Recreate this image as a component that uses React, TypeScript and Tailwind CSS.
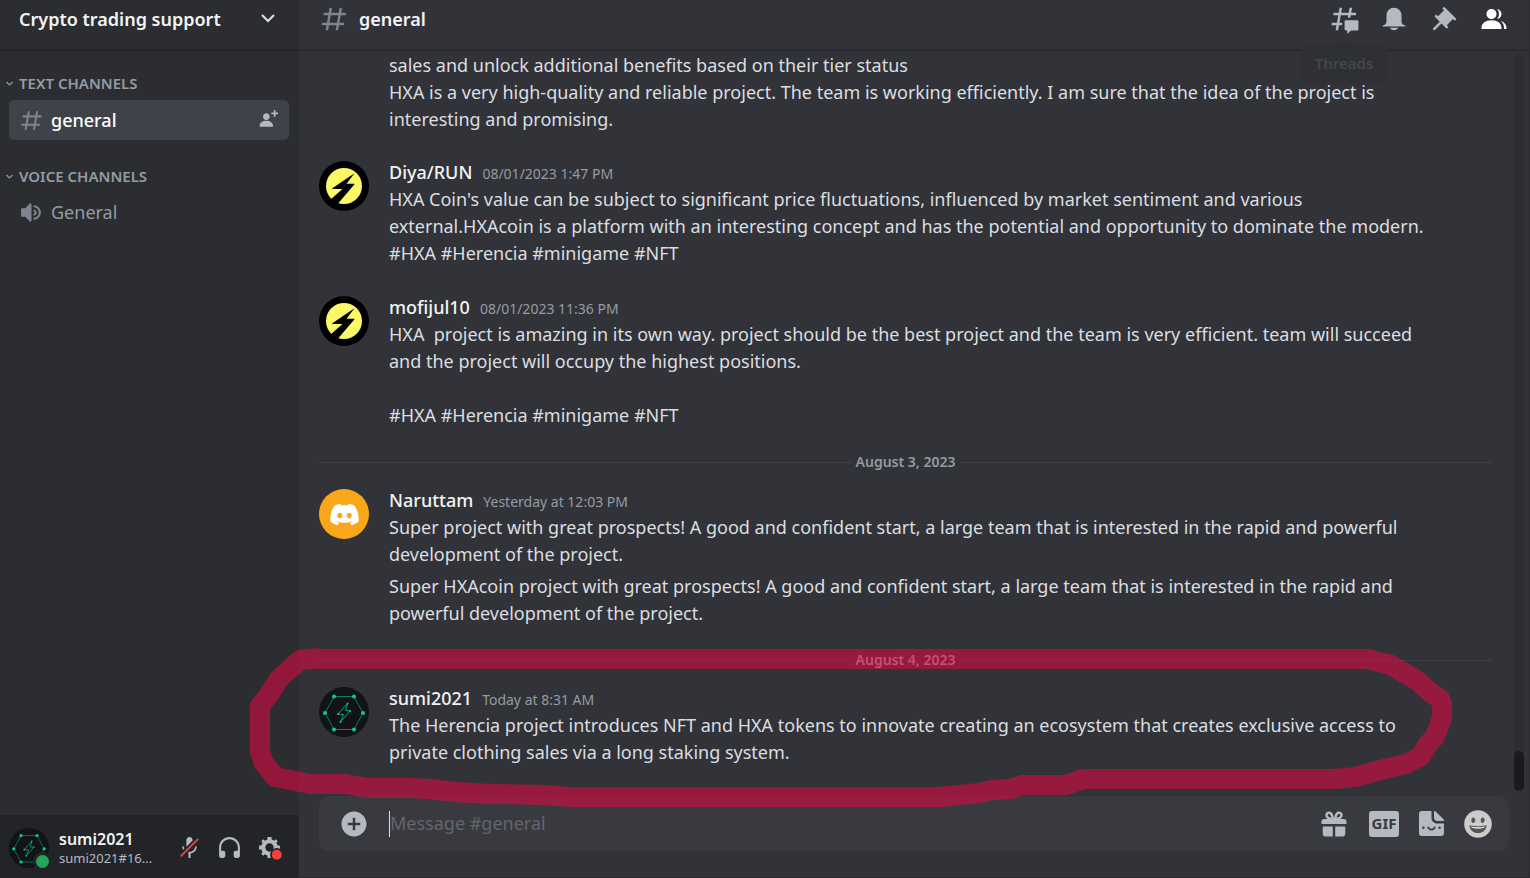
import React from 'react';
import { FaDiscord } from 'react-icons/fa';

interface IconProps {
  className?: string;
  children: React.ReactNode;
}

const Icon: React.FC<IconProps> = ({ className = 'w-[30px] h-[30px]', children }) => (
  <svg viewBox="0 0 24 24" fill="currentColor" aria-hidden="true" className={`shrink-0 ${className}`}>
    {children}
  </svg>
);

const HashIcon: React.FC<{ className?: string }> = ({ className }) => (
  <Icon className={className}>
    <path
      fillRule="evenodd"
      clipRule="evenodd"
      d="M5.88657 21C5.57547 21 5.3399 20.7189 5.39427 20.4126L6.00001 17H2.59511C2.28449 17 2.04905 16.7198 2.10259 16.4138L2.27759 15.4138C2.31946 15.1746 2.52722 15 2.77011 15H6.35001L7.41001 9H4.00511C3.69449 9 3.45905 8.71977 3.51259 8.41381L3.68759 7.41381C3.72946 7.17456 3.93722 7 4.18011 7H7.76001L8.39677 3.41262C8.43914 3.17391 8.64664 3 8.88907 3H9.87344C10.1845 3 10.4201 3.28107 10.3657 3.58738L9.76001 7H15.76L16.3968 3.41262C16.4391 3.17391 16.6466 3 16.8891 3H17.8734C18.1845 3 18.4201 3.28107 18.3657 3.58738L17.76 7H21.1649C21.4755 7 21.711 7.28023 21.6574 7.58619L21.4824 8.58619C21.4406 8.82544 21.2328 9 20.9899 9H17.41L16.35 15H19.7549C20.0655 15 20.301 15.2802 20.2474 15.5862L20.0724 16.5862C20.0306 16.8254 19.8228 17 19.5799 17H16L15.3632 20.5874C15.3209 20.8261 15.1134 21 14.8709 21H13.8866C13.5755 21 13.3399 20.7189 13.3943 20.4126L14 17H8.00001L7.36325 20.5874C7.32088 20.8261 7.11337 21 6.87094 21H5.88657ZM9.41045 9L8.35045 15H14.3504L15.4104 9H9.41045Z"
    />
  </Icon>
);

const BoltAvatar = () => (
  <svg viewBox="0 0 50 50" className="w-[50px] h-[50px]" aria-hidden="true">
    <circle cx="25" cy="25" r="25" fill="#000" />
    <circle cx="25" cy="25" r="18" fill="#fdf966" />
    <path d="M35.500 12.300 13.300 27.200v.8h10.200L11 39l3.500 5 5-2L35.300 23.500v-.7h-7.800Z" fill="#000" />
  </svg>
);

const DiscordAvatar = () => (
  <div className="flex w-[50px] h-[50px] items-center justify-center rounded-full bg-[#faa61a]">
    <FaDiscord className="w-[31px] h-[31px] text-white" aria-hidden="true" />
  </div>
);

const HexAvatar: React.FC<{ className?: string }> = ({ className = 'w-[50px] h-[50px]' }) => (
  <svg viewBox="0 0 50 50" className={className} aria-hidden="true">
    <circle cx="25" cy="25" r="25" fill="#111317" />
    <path d="M15 9.500h20L44 26l-9 16.500H15L6 26Z" fill="none" stroke="#0b7f5b" strokeWidth="1" />
    <path d="M28.500 16.500 19 27l5.500.5L21.500 35 31 24l-4.500-.5Z" fill="none" stroke="#08a877" strokeWidth="1" />
    <g fill="#0ccf8f">
      <circle cx="15" cy="9.500" r="2" />
      <circle cx="35" cy="9.500" r="2" />
      <circle cx="44" cy="26" r="2" />
      <circle cx="35" cy="42.500" r="2" />
      <circle cx="15" cy="42.500" r="2" />
      <circle cx="6" cy="26" r="2" />
      <circle cx="28.500" cy="16.500" r="1" />
      <circle cx="19" cy="27" r="1" />
      <circle cx="21.500" cy="35" r="1" />
      <circle cx="31" cy="24" r="1" />
    </g>
  </svg>
);

interface MessageProps {
  author: string;
  time: string;
  avatar: React.ReactNode;
  children: React.ReactNode;
}

const Message: React.FC<MessageProps> = ({ author, time, avatar, children }) => (
  <article className="flex gap-5">
    <div className="shrink-0 pt-[2px]">{avatar}</div>
    <div className="min-w-0">
      <header className="flex h-[27px] items-baseline gap-[10px]">
        <h3 className="font-medium text-[#f2f3f5]">{author}</h3>
        <time className="text-[14px] text-[#949ba4]">{time}</time>
      </header>
      {children}
    </div>
  </article>
);

const DateDivider: React.FC<{ label: string }> = ({ label }) => (
  <div className="mt-6 mb-4 flex h-[18px] items-center gap-[5px]">
    <div className="h-px flex-1 bg-[#3f4147]" />
    <span className="text-[14px] leading-[18px] font-semibold text-[#949ba4]">{label}</span>
    <div className="h-px flex-1 bg-[#3f4147]" />
  </div>
);

const CategoryLabel: React.FC<{ label: string }> = ({ label }) => (
  <button type="button" className="flex h-5 items-center gap-[5px] pl-[5px] text-[15px] font-semibold text-[#949ba4] uppercase">
    <svg viewBox="0 0 9 9" className="w-[9px] h-[9px]" aria-hidden="true">
      <path d="M1.500 3 4.500 6 7.500 3" fill="none" stroke="currentColor" strokeWidth="1.200" />
    </svg>
    {label}
  </button>
);

const Sidebar = () => (
  <aside className="flex w-[299px] shrink-0 flex-col bg-[#2b2d31]">
    <button type="button" className="flex h-[51px] items-center justify-between border-b-2 border-[#232529] pr-6 pb-[11px] pl-[19px] font-semibold text-[#f2f3f5]">
      Crypto trading support
      <svg viewBox="0 0 14 14" className="w-[14px] h-[14px]" aria-hidden="true">
        <path d="M1 3 7 9 13 3" fill="none" stroke="#dbdee1" strokeWidth="2.200" />
      </svg>
    </button>

    <nav className="flex-1 pt-[22px]">
      <CategoryLabel label="Text Channels" />
      <div className="mt-[7px] mr-[10px] ml-[9px] flex h-10 items-center rounded-[5px] bg-[#404249] pr-[11px] pl-[10px]">
        <a href="#general" className="flex flex-1 items-center gap-[7px] font-medium text-white">
          <HashIcon className="w-[25px] h-[25px] text-[#80848e]" />
          general
        </a>
        <button type="button" aria-label="Create invite" className="text-[#b5bac1]">
          <Icon className="w-5 h-5">
            <path d="M21 3H24V5H21V8H19V5H16V3H19V0H21V3ZM10 12C12.205 12 14 10.205 14 8C14 5.795 12.205 4 10 4C7.795 4 6 5.795 6 8C6 10.205 7.795 12 10 12ZM10 13C5.289 13 2 15.467 2 19V20H18V19C18 15.467 14.711 13 10 13Z" />
          </Icon>
        </button>
      </div>
      <div className="mt-[26px]">
        <CategoryLabel label="Voice Channels" />
      </div>
      <a href="#voice-general" className="mx-[9px] mt-[6px] flex h-10 items-center gap-[7px] pl-[10px] text-[#949ba4]">
        <Icon className="w-[25px] h-[25px] text-[#80848e]">
          <path d="M11.383 3.07904C11.009 2.92504 10.579 3.01004 10.293 3.29604L6 8.00204H3C2.45 8.00204 2 8.45304 2 9.00204V15.002C2 15.552 2.45 16.002 3 16.002H6L10.293 20.71C10.579 20.996 11.009 21.082 11.383 20.927C11.757 20.772 12 20.407 12 20.002V4.00204C12 3.59904 11.757 3.23204 11.383 3.07904ZM14 5.00195V7.00195C16.757 7.00195 19 9.24595 19 12.002C19 14.759 16.757 17.002 14 17.002V19.002C17.86 19.002 21 15.863 21 12.002C21 8.14295 17.86 5.00195 14 5.00195ZM14 9.00195C15.654 9.00195 17 10.349 17 12.002C17 13.657 15.654 15.002 14 15.002V13.002C14.551 13.002 15 12.553 15 12.002C15 11.451 14.551 11.002 14 11.002V9.00195Z" />
        </Icon>
        General
      </a>
    </nav>

    <UserPanel />
  </aside>
);

const UserPanel = () => (
  <section className="flex h-[63px] items-center bg-[#232428] pt-[2px] pr-[17px] pl-[9px] text-[#b5bac1]">
    <div className="relative shrink-0">
      <HexAvatar className="w-10 h-10" />
      <span className="absolute -right-[3px] -bottom-[3px] h-[19px] w-[19px] rounded-full border-[3px] border-[#232428] bg-[#23a55a]" />
    </div>
    <div className="ml-[10px] min-w-0 flex-1">
      <div className="truncate text-[16px] leading-[20px] font-semibold text-[#f2f3f5]">sumi2021</div>
      <div className="text-[13px] leading-[18px]">sumi2021#16...</div>
    </div>
    <div className="flex items-center gap-[15px]">
      <button type="button" aria-label="Unmute">
        <Icon className="w-[25px] h-[25px]">
          <path d="M6.7 11H5C5 12.19 5.34 13.3 5.9 14.28L7.13 13.05C6.86 12.43 6.7 11.74 6.7 11Z" />
          <path d="M9.01 11.085C9.015 11.1125 9.02 11.14 9.02 11.17L15 5.18V5C15 3.34 13.66 2 12 2C10.34 2 9 3.34 9 5V11C9 11.03 9.005 11.0575 9.01 11.085Z" />
          <path d="M11.7237 16.0927L10.9632 16.8531L10.2533 17.5688C10.4978 17.633 10.747 17.6839 11 17.72V22H13V17.72C16.28 17.23 19 14.41 19 11H17.3C17.3 14 14.76 16.1 12 16.1C11.9076 16.1 11.8155 16.0975 11.7237 16.0927Z" />
          <path fill="#f23f42" d="M21 4.27L19.73 3L3 19.73L4.27 21L8.46 16.82L9.69 15.58L11.35 13.92L14.99 10.28L21 4.27Z" />
        </Icon>
      </button>
      <button type="button" aria-label="Deafen">
        <Icon className="w-[25px] h-[25px]">
          <path d="M12 2.00305C6.486 2.00305 2 6.48805 2 12.0031V20.0031C2 21.1071 2.895 22.0031 4 22.0031H6C7.104 22.0031 8 21.1071 8 20.0031V17.0031C8 15.8991 7.104 15.0031 6 15.0031H4V12.0031C4 7.59105 7.589 4.00305 12 4.00305C16.411 4.00305 20 7.59105 20 12.0031V15.0031H18C16.896 15.0031 16 15.8991 16 17.0031V20.0031C16 21.1071 16.896 22.0031 18 22.0031H20C21.104 22.0031 22 21.1071 22 20.0031V12.0031C22 6.48805 17.514 2.00305 12 2.00305Z" />
        </Icon>
      </button>
      <button type="button" aria-label="User settings">
        <Icon className="w-[25px] h-[25px]">
          <path
            fillRule="evenodd"
            d="M19.738 10H22V14H19.739C19.498 14.931 19.1 15.798 18.565 16.564L20 18L18 20L16.565 18.564C15.797 19.099 14.932 19.498 14 19.738V22H10V19.738C9.069 19.498 8.203 19.099 7.436 18.564L6 20L4 18L5.436 16.564C4.901 15.799 4.502 14.932 4.262 14H2V10H4.262C4.502 9.068 4.9 8.202 5.436 7.436L4 6L6 4L7.436 5.436C8.202 4.9 9.068 4.502 10 4.262V2H14V4.261C14.932 4.502 15.797 4.9 16.565 5.435L18 3.999L20 5.999L18.564 7.436C19.099 8.202 19.498 9.069 19.738 10ZM12 16C14.2091 16 16 14.2091 16 12C16 9.79086 14.2091 8 12 8C9.79086 8 8 9.79086 8 12C8 14.2091 9.79086 16 12 16Z"
          />
          <circle cx="19" cy="19" r="6.500" fill="#232428" />
          <circle cx="19" cy="19" r="4.800" fill="#f23f42" />
        </Icon>
      </button>
    </div>
  </section>
);

const ChannelHeader = () => (
  <header className="flex h-[51px] shrink-0 items-center border-b-2 border-[#2a2b30] pr-5 pb-[11px] pl-5">
    <HashIcon className="w-[30px] h-[30px] text-[#80848e]" />
    <h1 className="ml-[10px] flex-1 font-semibold text-[#f2f3f5]">general</h1>
    <div className="flex items-center gap-5 text-[#b5bac1]">
      <div className="relative">
        <button type="button" aria-label="Threads" className="block">
          <Icon>
            <path d="M5.43309 21C5.35842 21 5.30189 20.9325 5.31494 20.859L5.99991 17H2.14274C2.06819 17 2.01168 16.9327 2.02453 16.8593L2.33253 15.0993C2.34258 15.0419 2.39244 15 2.45074 15H6.34991L7.40991 9H3.55274C3.47819 9 3.42168 8.93274 3.43453 8.85931L3.74253 7.09931C3.75258 7.04189 3.80244 7 3.86074 7H7.75991L8.45234 3.09903C8.46251 3.04174 8.51231 3 8.57049 3H10.3267C10.4014 3 10.4579 3.06746 10.4449 3.14097L9.75991 7H15.7599L16.4523 3.09903C16.4625 3.04174 16.5123 3 16.5705 3H18.3267C18.4014 3 18.4579 3.06746 18.4449 3.14097L17.7599 7H21.6171C21.6916 7 21.7481 7.06725 21.7353 7.14069L21.4273 8.90069C21.4172 8.95811 21.3674 9 21.3091 9H17.4099L17.0495 11.04H15.05L15.4104 9H9.41035L8.35035 15H10.5599V17H7.99991L7.30749 20.901C7.29732 20.9583 7.24752 21 7.18934 21H5.43309Z" />
            <path d="M13.4399 12.96C12.9097 12.96 12.4799 13.3898 12.4799 13.92V20.2213C12.4799 20.7515 12.9097 21.1813 13.4399 21.1813H14.3999C14.5325 21.1813 14.6399 21.2887 14.6399 21.4213V23.4597C14.6399 23.6677 14.8865 23.7773 15.0408 23.6378L17.4858 21.4289C17.6622 21.2695 17.8916 21.1813 18.1294 21.1813H22.5599C23.0901 21.1813 23.5199 20.7515 23.5199 20.2213V13.92C23.5199 13.3898 23.0901 12.96 22.5599 12.96H13.4399Z" />
          </Icon>
        </button>
        <div role="tooltip" className="absolute top-10 left-1/2 z-10 -translate-x-1/2 rounded-[6px] bg-[#2e3035] px-[14px] py-[7px] text-[15px] leading-6 font-semibold text-[#44464c]">
          <span className="absolute -top-[5px] left-1/2 -translate-x-1/2 border-x-[6px] border-b-[6px] border-x-transparent border-b-[#2e3035]" />
          Threads
        </div>
      </div>
      <button type="button" aria-label="Notification settings">
        <Icon>
          <path d="M18 9V14C18 15.657 19.344 17 21 17V18H3V17C4.656 17 6 15.657 6 14V9C6 5.686 8.686 3 12 3C15.314 3 18 5.686 18 9ZM11.9999 21C10.5239 21 9.24793 20.19 8.55493 19H15.4449C14.7519 20.19 13.4759 21 11.9999 21Z" />
        </Icon>
      </button>
      <button type="button" aria-label="Pinned messages">
        <Icon>
          <path d="M22 12L12.101 2.10101L10.686 3.51401L12.101 4.92901L7.15096 9.87801V9.88001L5.73596 8.46501L4.32196 9.88001L8.56496 14.122L2.90796 19.778L4.32196 21.192L9.97896 15.536L14.222 19.778L15.636 18.364L14.222 16.95L19.171 12H19.172L20.586 13.414L22 12Z" />
        </Icon>
      </button>
      <button type="button" aria-label="Member list" className="text-white">
        <Icon>
          <path d="M14 8.00598C14 10.211 12.206 12.006 10 12.006C7.795 12.006 6 10.211 6 8.00598C6 5.80098 7.794 4.00598 10 4.00598C12.206 4.00598 14 5.80098 14 8.00598ZM2 19.006C2 15.473 5.29 13.006 10 13.006C14.711 13.006 18 15.473 18 19.006V20.006H2V19.006Z" />
          <path d="M20.0001 20.006H22.0001V19.006C22.0001 16.4433 20.2697 14.4415 17.5213 13.5352C19.0621 14.9127 20.0001 16.8059 20.0001 19.006V20.006Z" />
          <path d="M14.8834 11.9077C16.6657 11.5044 18.0001 9.9077 18.0001 8.00598C18.0001 5.96916 16.4693 4.28218 14.4971 4.0367C15.4322 5.09511 16.0001 6.48524 16.0001 8.00598C16.0001 9.44888 15.4889 10.7742 14.6378 11.8102C14.7203 11.8418 14.8022 11.8743 14.8834 11.9077Z" />
        </Icon>
      </button>
    </div>
  </header>
);

const MessageList = () => (
  <div className="flex min-h-0 flex-1">
    <div className="min-w-0 flex-1 overflow-hidden pt-px pr-[22px] pl-5 leading-[27px] whitespace-nowrap text-[#dbdee1]">
      <p className="pl-[70px]">
        sales and unlock additional benefits based on their tier status
        <br />
        HXA is a very high-quality and reliable project. The team is working efficiently. I am sure that the idea of the project is
        <br />
        interesting and promising.
      </p>

      <div className="mt-[26px] space-y-[27px]">
        <Message author="Diya/RUN" time="08/01/2023 1:47 PM" avatar={<BoltAvatar />}>
          <p>
            HXA Coin's value can be subject to significant price fluctuations, influenced by market sentiment and various
            <br />
            external.HXAcoin is a platform with an interesting concept and has the potential and opportunity to dominate the modern.
            <br />
            #HXA #Herencia #minigame #NFT
          </p>
        </Message>
        <Message author="mofijul10" time="08/01/2023 11:36 PM" avatar={<BoltAvatar />}>
          <p>
            HXA&nbsp; project is amazing in its own way. project should be the best project and the team is very efficient. team will succeed
            <br />
            and the project will occupy the highest positions.
            <br />
            <br />
            #HXA #Herencia #minigame #NFT
          </p>
        </Message>
      </div>

      <DateDivider label="August 3, 2023" />
      <Message author="Naruttam" time="Yesterday at 12:03 PM" avatar={<DiscordAvatar />}>
        <p>
          Super project with great prospects! A good and confident start, a large team that is interested in the rapid and powerful
          <br />
          development of the project.
        </p>
        <p className="mt-[5px]">
          Super HXAcoin project with great prospects! A good and confident start, a large team that is interested in the rapid and
          <br />
          powerful development of the project.
        </p>
      </Message>

      <DateDivider label="August 4, 2023" />
      <Message author="sumi2021" time="Today at 8:31 AM" avatar={<HexAvatar />}>
        <p>
          The Herencia project introduces NFT and HXA tokens to innovate creating an ecosystem that creates exclusive access to
          <br />
          private clothing sales via a long staking system.
        </p>
      </Message>
    </div>
    <div className="mt-[3px] mr-[5px] mb-[5px] flex w-[10px] flex-col justify-end rounded-full bg-[#2b2d31]">
      <div className="h-10 rounded-full bg-[#1a1b1e]" />
    </div>
  </div>
);

const Composer = () => (
  <form className="mr-5 mb-[26px] ml-5 flex h-[55px] shrink-0 items-center gap-5 rounded-[10px] bg-[#383a40] pr-[17px] pl-5 text-[#b5bac1]">
    <button type="button" aria-label="Add attachment">
      <Icon>
        <path d="M12 2.00098C6.486 2.00098 2 6.48698 2 12.001C2 17.515 6.486 22.001 12 22.001C17.514 22.001 22 17.515 22 12.001C22 6.48698 17.514 2.00098 12 2.00098ZM17 13.001H13V17.001H11V13.001H7V11.001H11V7.00098H13V11.001H17V13.001Z" />
      </Icon>
    </button>
    <input
      type="text"
      aria-label="Message #general"
      placeholder="Message #general"
      className="h-[26px] min-w-0 flex-1 border-l border-[#dbdee1] bg-transparent text-[#dbdee1] outline-none placeholder:text-[#62656d]"
    />
    <button type="button" aria-label="Send a gift">
      <Icon>
        <path
          fillRule="evenodd"
          clipRule="evenodd"
          d="M16.886 7.999H20C21.104 7.999 22 8.896 22 9.999V11.999H2V9.999C2 8.896 2.897 7.999 4 7.999H7.114C6.663 7.764 6.236 7.477 5.879 7.121C4.709 5.951 4.709 4.048 5.879 2.879C7.012 1.746 8.986 1.745 10.121 2.877C11.758 4.514 11.979 7.595 11.998 7.941C11.9991 7.9525 11.9966 7.96279 11.9941 7.97304C11.992 7.98151 11.99 7.98995 11.99 7.999H12.01C12.01 7.98986 12.0079 7.98134 12.0058 7.97281C12.0034 7.96265 12.0009 7.95247 12.002 7.941C12.022 7.595 12.242 4.514 13.879 2.877C15.014 1.745 16.986 1.746 18.121 2.877C19.29 4.049 19.29 5.952 18.121 7.121C17.764 7.477 17.337 7.764 16.886 7.999ZM7.293 5.707C6.903 5.316 6.903 4.682 7.293 4.292C7.481 4.103 7.732 4 8 4C8.268 4 8.519 4.103 8.707 4.292C9.297 4.882 9.641 5.94 9.825 6.822C8.945 6.639 7.879 6.293 7.293 5.707ZM14.174 6.824C14.359 5.941 14.702 4.883 15.293 4.293C15.481 4.103 15.732 4 16 4C16.268 4 16.519 4.103 16.706 4.291C17.096 4.682 17.097 5.316 16.707 5.707C16.116 6.298 15.057 6.642 14.174 6.824ZM3 13.999H11V22H5C3.896 22 3 21.105 3 20V13.999ZM13 13.999H21V20C21 21.105 20.103 22 19 22H13V13.999Z"
        />
      </Icon>
    </button>
    <button type="button" aria-label="Open GIF picker" className="flex h-[26px] w-[30px] items-center justify-center rounded-[3px] bg-[#b5bac1] text-[15px] leading-none font-bold text-[#383a40]">
      GIF
    </button>
    <button type="button" aria-label="Open sticker picker">
      <svg viewBox="0 0 20 20" className="w-[25px] h-[25px]" aria-hidden="true">
        <path
          fill="currentColor"
          d="M12.0002 0.662583V5.40204C12.0002 6.83974 13.1605 7.99981 14.5986 7.99981H19.3393C19.9245 7.99981 20.222 7.29584 19.8055 6.8794L13.1209 0.196569C12.7043 -0.219868 12.0002 0.0748593 12.0002 0.662583ZM14.5759 10.0282C12.0336 10.0282 9.96986 7.96441 9.96986 5.42209V0.0583083H1.99397C0.897287 0.0583083 0 0.955595 0 2.05228V18.0041C0 19.1007 0.897287 19.998 1.99397 19.998H17.9457C19.0424 19.998 19.9397 19.1007 19.9397 18.0041V10.0282H14.5759Z"
        />
        <circle cx="3.500" cy="13.300" r="1" fill="#383a40" />
        <circle cx="16.500" cy="13.300" r="1" fill="#383a40" />
        <path d="M7.200 12.600c.7 3 4.900 3 5.600 0" fill="none" stroke="#383a40" strokeWidth="1.300" />
      </svg>
    </button>
    <button type="button" aria-label="Select emoji">
      <svg viewBox="0 0 28 28" className="w-[28px] h-[28px]" aria-hidden="true">
        <circle cx="14" cy="14" r="13.800" fill="#cccccc" />
        <ellipse cx="9.300" cy="10.200" rx="1.900" ry="2.800" fill="#555" />
        <ellipse cx="18.700" cy="10.200" rx="1.900" ry="2.800" fill="#555" />
        <path d="M5.500 15.200Q14 17.400 22.500 15.200C22.500 20 18.800 23 14 23S5.500 20 5.500 15.200Z" fill="#555" />
        <path d="M7 16.500Q14 18.200 21 16.500C20.500 19.200 7.500 19.200 7 16.500Z" fill="#fff" />
      </svg>
    </button>
  </form>
);

// Hand-drawn marker loop around the newest message
const MarkerLoop = () => (
  <svg viewBox="0 0 1530 878" className="pointer-events-none absolute inset-0 h-full w-full" aria-hidden="true">
    <path
      d="M316 659H1368L1378 662L1389 664L1418 681L1430 692L1440 699L1442 704V717L1438 729L1434 738L1428 744L1421 756L1406 764L1380 770L1355 777L1335 779H1083L1066 785H1022L1011 789L993 790L979 793L940 797H568L545 795L490 794L455 792L430 789L410 788H368L345 784H311L295 781L275 777L264 763L260 752V706L270 693L279 679L291 668L300 660L318 658"
      fill="none"
      stroke="#ff0044"
      strokeOpacity="0.490"
      strokeWidth="20"
      strokeLinejoin="round"
    />
  </svg>
);

const App: React.FC = () => {
  return (
    <div className="relative flex h-screen overflow-hidden bg-[#313338] font-['Noto_Sans',sans-serif] text-[18px]">
      <Sidebar />
      <main className="flex min-w-0 flex-1 flex-col border-r border-b border-[#292a2f]">
        <ChannelHeader />
        <MessageList />
        <Composer />
      </main>
      <MarkerLoop />
    </div>
  );
};

export default App;
